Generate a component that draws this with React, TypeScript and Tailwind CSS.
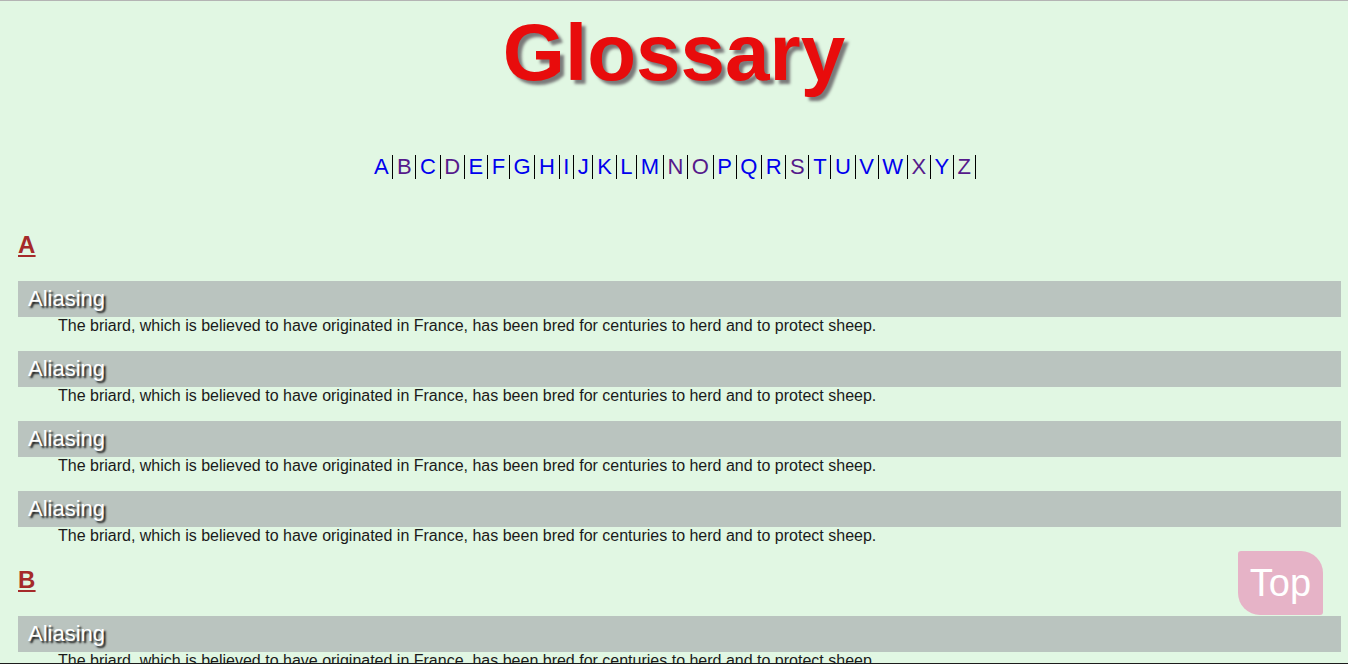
import React from "react";

const LETTERS = "ABCDEFGHIJKLMNOPQRSTUVWXYZ".split("");
const VISITED = new Set(["B", "D", "N", "O", "S", "X", "Z"]);
const DESC =
  "The briard, which is believed to have originated in France, has been bred for centuries to herd and to protect sheep.";

function Section({ letter, count }: { letter: string; count: number }) {
  return (
    <section className="pt-[5px]">
      <h2 className="h-[28px] leading-[28px] text-[24px] font-bold text-[#a52a2a] underline mb-[22px]">
        <a href={`#${letter}`}>{letter}</a>
      </h2>
      <dl>
        {Array.from({ length: count }).map((_, i) => (
          <div key={i} className="mb-[16px]">
            <dt className="h-[36px] leading-[36px] bg-[#bac4bf] pl-[10px] text-[22px] text-white [text-shadow:2px_2px_2px_#111]">
              Aliasing
            </dt>
            <dd className="ml-[40px] h-[18px] leading-[18px] text-[16px] text-[#1a1a1a]">{DESC}</dd>
          </div>
        ))}
      </dl>
    </section>
  );
}

export default function App() {
  return (
    <div className="min-h-screen bg-[#e1f7e3] border-t border-[#b4b4b4] font-['Liberation_Sans',Arial,sans-serif]">
      <h1 className="mt-[12px] h-[80px] leading-[80px] text-center text-[80px] font-bold text-[#e80c0c] [text-shadow:4px_4px_3px_#7a7a7a]">
        Glossary
      </h1>
      <nav className="mt-[62px] mb-[47px] flex justify-center pr-[2px]">
        {LETTERS.map((l) => (
          <a
            key={l}
            href={`#${l}`}
            className={`h-[24px] leading-[24px] text-[22px] px-[3.7px] border-r border-black ${
              VISITED.has(l) ? "text-[#551a8b]" : "text-[#0000ee]"
            }`}
          >
            {l}
          </a>
        ))}
      </nav>
      <main className="ml-[18px] mr-[7px]">
        <Section letter="A" count={4} />
        <Section letter="B" count={4} />
        <Section letter="C" count={4} />
      </main>
      <a
        href="#"
        className="fixed right-[25px] bottom-[49px] w-[85px] h-[64px] flex items-center justify-center bg-[#e6b3c7] text-white text-[38px] rounded-tl-[3px] rounded-br-[3px] rounded-tr-[22px] rounded-bl-[22px]"
      >
        Top
      </a>
      <div className="fixed left-0 right-0 bottom-0 h-px bg-[#1c1c1c]" />
    </div>
  );
}
